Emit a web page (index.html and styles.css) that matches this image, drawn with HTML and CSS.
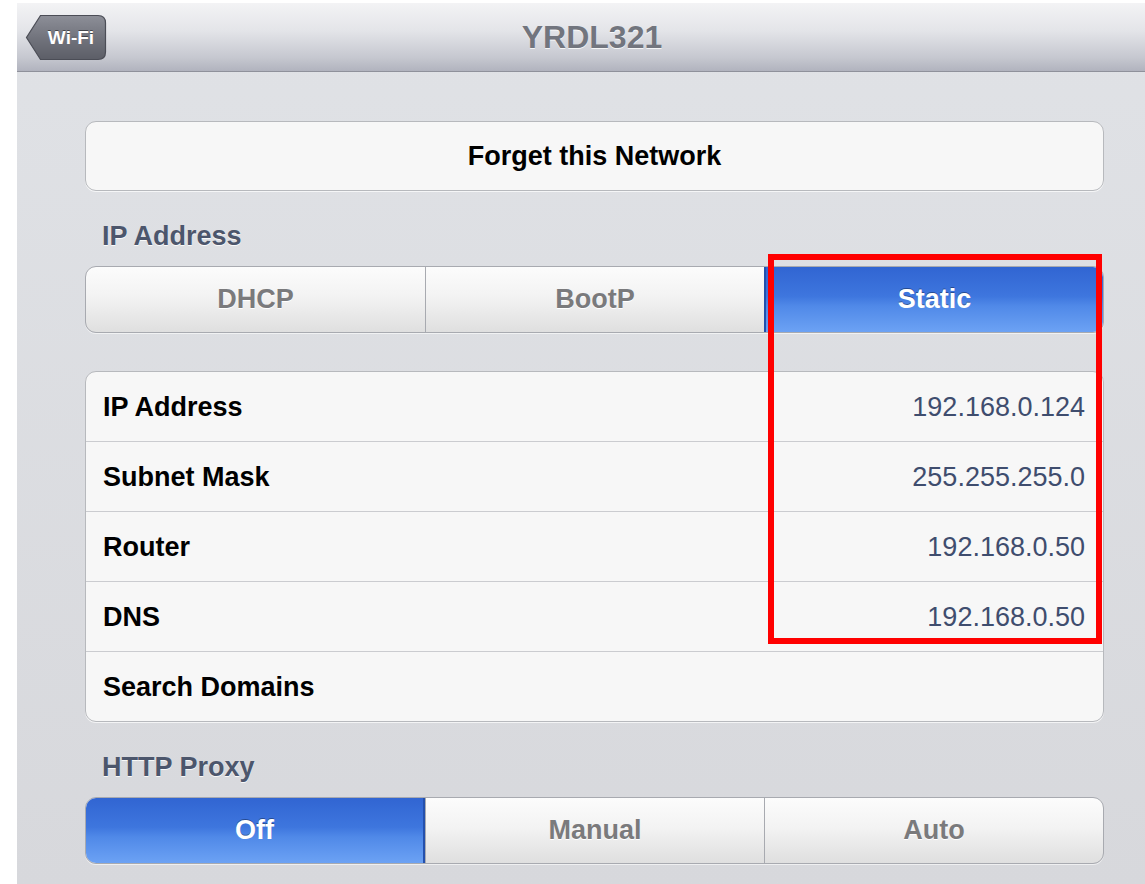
FILE: index.html
```html
<!DOCTYPE html>
<html lang="en">
<head>
<meta charset="utf-8">
<title>YRDL321</title>
<link rel="stylesheet" href="styles.css">
</head>
<body>
<div class="screen">
  <header class="navbar">
    <div class="back">
      <svg class="back-shape" width="82" height="47" viewBox="0 0 82 47" aria-hidden="true">
        <defs>
          <linearGradient id="bg" x1="0" y1="0" x2="0" y2="1">
            <stop offset="0" stop-color="#8d8f98"/>
            <stop offset="0.5" stop-color="#72747d"/>
            <stop offset="1" stop-color="#5c5e67"/>
          </linearGradient>
        </defs>
        <path d="M15.5 1.5 H73 Q80.5 1.5 80.5 9 V38 Q80.5 45.5 73 45.5 H15.5 L1.5 23.5 Z" fill="url(#bg)" stroke="#4b4d56" stroke-width="1.2"/>
      </svg>
      <span class="back-label">Wi-Fi</span>
    </div>
    <h1 class="title">YRDL321</h1>
  </header>

  <main class="content">
    <div class="button-row">Forget this Network</div>

    <h2 class="section-head">IP Address</h2>
    <div class="segmented">
      <div class="seg">DHCP</div>
      <div class="seg">BootP</div>
      <div class="seg selected">Static</div>
    </div>

    <div class="table">
      <div class="row"><span class="label">IP Address</span><span class="value">192.168.0.124</span></div>
      <div class="row"><span class="label">Subnet Mask</span><span class="value">255.255.255.0</span></div>
      <div class="row"><span class="label">Router</span><span class="value">192.168.0.50</span></div>
      <div class="row"><span class="label">DNS</span><span class="value">192.168.0.50</span></div>
      <div class="row"><span class="label">Search Domains</span><span class="value"></span></div>
    </div>

    <h2 class="section-head">HTTP Proxy</h2>
    <div class="segmented">
      <div class="seg selected">Off</div>
      <div class="seg">Manual</div>
      <div class="seg">Auto</div>
    </div>
  </main>

  <div class="highlight"></div>
</div>
</body>
</html>
```

FILE: styles.css
```css
html, body {
  margin: 0;
  padding: 0;
  background: #ffffff;
  overflow: hidden;
}

body {
  padding: 3px 0 0 17px;
  height: 884px;
  box-sizing: border-box;
  font-family: "Liberation Sans", Arial, Helvetica, sans-serif;
}

.screen {
  position: relative;
  height: 881px;
  background: linear-gradient(#e0e2e6, #d7d8dc);
}

.navbar {
  height: 68px;
  border-bottom: 1px solid #8f919b;
  background: linear-gradient(#f3f3f5 0%, #e4e5e9 40%, #c6c8d0 80%, #b1b3be 100%);
  display: flex;
  align-items: center;
  padding: 0 68px 0 8px;
}

.back {
  position: relative;
  width: 82px;
  height: 47px;
  display: flex;
  align-items: center;
  justify-content: center;
  padding-left: 10px;
  box-sizing: border-box;
  margin-top: 1px;
}

.back-shape {
  position: absolute;
  left: 0;
  top: 0;
}

.back-label {
  position: relative;
  color: #ffffff;
  font-weight: bold;
  font-size: 19px;
  text-shadow: 0 -1px 0 rgba(0, 0, 0, 0.45);
}

.title {
  flex: 1;
  margin: 0;
  text-align: center;
  font-size: 32px;
  font-weight: bold;
  color: #72757e;
  text-shadow: 0 1px 0 rgba(255, 255, 255, 0.8);
  line-height: 34px;
}

.content {
  padding: 49px 41px 0 68px;
  display: flex;
  flex-direction: column;
}

.button-row {
  height: 68px;
  border: 1px solid #b7b9bd;
  border-radius: 11px;
  background: #f7f7f7;
  box-shadow: 0 1px 0 rgba(255, 255, 255, 0.7);
  display: flex;
  align-items: center;
  justify-content: center;
  font-size: 27px;
  font-weight: bold;
  color: #000;
}

.section-head {
  margin: 30px 0 0 17px;
  font-size: 27px;
  line-height: 30px;
  font-weight: bold;
  color: #4c566c;
  text-shadow: 0 1px 0 rgba(255, 255, 255, 0.85);
}

.segmented {
  margin-top: 15px;
  height: 67px;
  display: grid;
  grid-template-columns: 1fr 1fr 1fr;
  border: 1px solid #a8aab0;
  border-radius: 11px;
  overflow: hidden;
  box-sizing: border-box;
  background: linear-gradient(#fcfcfc 0%, #f3f3f3 45%, #dfdfdf 100%);
  box-shadow: 0 1px 0 rgba(255, 255, 255, 0.6);
}

.seg {
  display: flex;
  align-items: center;
  justify-content: center;
  font-size: 27px;
  font-weight: bold;
  color: #7a7a7c;
  text-shadow: 0 1px 0 #ffffff;
  border-left: 1px solid #a8aab0;
}

.seg:first-child {
  border-left: none;
}

.seg.selected {
  color: #ffffff;
  text-shadow: 0 -1px 0 rgba(0, 0, 0, 0.35);
  background: linear-gradient(#3165d2 0%, #3e76de 45%, #5089e8 60%, #6ca2f4 100%);
  border-left: 2px solid #2450ad;
}

.seg.selected:first-child {
  border-left: none;
  border-right: 2px solid #2450ad;
}

.table {
  margin-top: 38px;
  border: 1px solid #b7b9bd;
  border-radius: 11px;
  background: #f7f7f7;
  box-shadow: 0 1px 0 rgba(255, 255, 255, 0.7);
  display: flex;
  flex-direction: column;
}

.row {
  height: 69px;
  display: flex;
  align-items: center;
  justify-content: space-between;
  padding: 0 18px 0 17px;
  border-top: 1px solid #cbccd0;
  font-size: 27px;
  line-height: 30px;
}

.row:first-child {
  border-top: none;
}

.label {
  font-weight: bold;
  color: #000;
}

.value {
  color: #3f4d6e;
}

.highlight {
  position: absolute;
  left: 751px;
  top: 251px;
  width: 334px;
  height: 390px;
  border: 6px solid #ff0000;
  box-sizing: border-box;
}
```
